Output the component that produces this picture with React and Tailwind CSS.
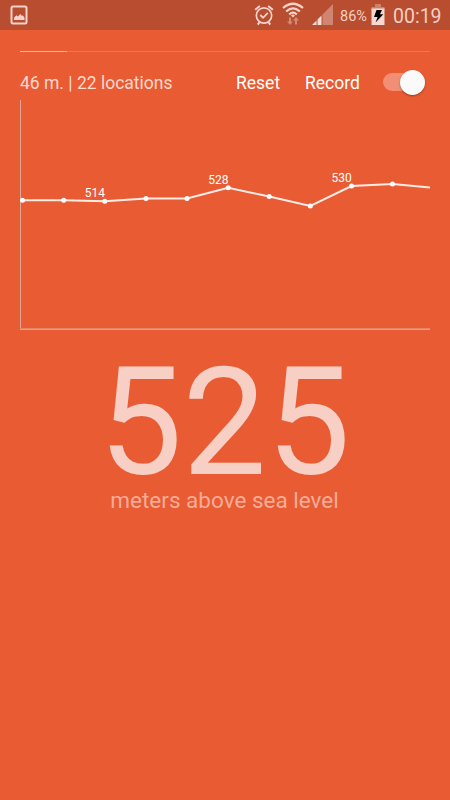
const points = [
  { x: 2.5, y: 100.3 },
  { x: 43.7, y: 100.3 },
  { x: 84.8, y: 101.3, label: '514' },
  { x: 126, y: 98.4 },
  { x: 167, y: 98.4 },
  { x: 208.2, y: 87.8, label: '528' },
  { x: 249.2, y: 96.5 },
  { x: 290.3, y: 106 },
  { x: 331.5, y: 86, label: '530' },
  { x: 372.5, y: 84 },
];

function PictureIcon() {
  return (
    <svg className="h-5 w-[18px]" viewBox="0 0 18 20" fill="none">
      <rect x="1.5" y="1.5" width="15" height="17" rx="1.5" stroke="#f3d3cb" strokeWidth="2" />
      <path d="M4 15v-2.2l2.3-2.5 1.7 1.2 2.2-2.4 1.6 1.6 1.2-.3 1.5 2.4V15z" fill="#f3d3cb" />
    </svg>
  );
}

function AlarmIcon() {
  return (
    <svg className="h-[22px] w-5" viewBox="0 0 20 22" fill="none" stroke="#f3d3cb">
      <circle cx="10" cy="11.500" r="7.700" strokeWidth="1.700" />
      <path d="M1.200 5.800 5.800 2M18.800 5.800 14.200 2M5.500 18.200l-1.700 2.400M14.500 18.200l1.700 2.400" strokeWidth="2" />
      <path d="M6.300 11l2.800 2.800 4.700-4.900" strokeWidth="1.800" />
    </svg>
  );
}

function WifiIcon() {
  return (
    <svg className="h-6 w-[22px]" viewBox="0 0 22 24" fill="none">
      <g stroke="#f3d3cb" strokeWidth="2.200">
        <path d="M1 6Q11-2.500 21 6" />
        <path d="M4.200 9.500Q11 3.200 17.800 9.500" />
        <path d="M7.200 12.500Q11 8.800 14.800 12.500" />
      </g>
      <path d="M9 13.500a3 3 0 0 1 4 0L11 15.500z" fill="#f3d3cb" />
      <path d="M7 15.500h2v4h2L8 23l-3-3.500h2zM13 22.500h2v-4h2L14 15l-3 3.500h2z" fill="#d48a77" />
    </svg>
  );
}

function SignalIcon() {
  return (
    <svg className="h-[21px] w-[21px]" viewBox="0 0 21 21">
      <path d="M10.500 21V10.500L21 0v21z" fill="#d08572" />
      <path d="M0 21l4.500-4.500V21zM5.500 21v-5.500l4-4V21z" fill="#f8ded7" />
    </svg>
  );
}

function BatteryIcon() {
  return (
    <svg className="h-[21px] w-3.5" viewBox="0 0 14 21">
      <path d="M4 0h6v3h3.5v3H.5V3H4z" fill="#cd8270" />
      <path d="M.5 4.5h13V21H.5z" fill="#f8d9d1" />
      <path d="M5.500 6h5.500L9 10.200h3.300L4.600 18.500l2-5.500H3z" fill="#000" />
    </svg>
  );
}

function StatusBar() {
  return (
    <div className="flex h-[30px] items-center bg-[#b84d2f] pl-2.5 pr-[9px] text-[#f3cfc5]">
      <PictureIcon />
      <div className="ml-auto flex items-center">
        <AlarmIcon />
        <div className="ml-2 -mt-0.5"><WifiIcon /></div>
        <div className="ml-2 -mt-px"><SignalIcon /></div>
        <span className="ml-[7px] mt-1 w-[28px] whitespace-nowrap text-[14.5px] leading-5">86%</span>
        <div className="ml-[3px] -mt-0.5"><BatteryIcon /></div>
        <span className="ml-2 mt-[3px] w-[48px] whitespace-nowrap text-[19.5px] leading-6">00:19</span>
      </div>
    </div>
  );
}

function Toggle() {
  return (
    <div className="flex h-[18px] w-[42px] items-center justify-end rounded-full bg-[#f28e73]">
      <div className="h-[25px] w-[25px] shrink-0 rounded-full bg-[#fafafa] shadow-[0_1px_2px_rgba(0,0,0,0.35)]" />
    </div>
  );
}

function Chart() {
  const line = points.map((p) => `${p.x},${p.y}`).join(' ');

  return (
    <svg className="block h-[230px] w-[410px]" viewBox="0 0 410 230">
      <path d="M.5 0v230" stroke="#dfa591" />
      <path d="M0 228.5h410" stroke="#e28565" />
      <path d="M0 229.5h410" stroke="#e0a18c" />
      <polyline points={`${line} 410,87.5`} fill="none" stroke="#fdebe6" strokeWidth="2" />
      {points.map((p) => (
        <g key={p.x}>
          <circle cx={p.x} cy={p.y} r="2.5" fill="#fff" />
          {p.label && (
            <text x={p.x + 0.2} y={p.y - 4.2} textAnchor="end" fontSize="12" fill="#fff">{p.label}</text>
          )}
        </g>
      ))}
    </svg>
  );
}

export default function App() {
  return (
    <div className="h-[800px] w-[450px] overflow-hidden bg-[#e95b33] font-[Roboto,sans-serif]">
      <StatusBar />
      <div className="px-5 pt-5">
        <div className="h-0.5 pt-px">
          <div className="h-px bg-[#ed7554]">
            <div className="h-px w-[47px] bg-[#f8b5a1]" />
          </div>
        </div>
        <div className="flex h-12 items-center pt-[13px] text-[17.5px] leading-6 text-white">
          <span className="w-[216px] whitespace-nowrap text-[#fbd9cf]">46 m. | 22 locations</span>
          <span className="w-[69px]">Reset</span>
          <span className="w-[78px]">Record</span>
          <div className="-mt-px"><Toggle /></div>
        </div>
        <Chart />
      </div>
      <div className="pt-[30px] text-center">
        <div className="pr-px text-[149.5px] leading-[126px] text-[#f8cfc4]">525</div>
        <div className="pr-px text-[22.5px] leading-7 text-[#f5ac97]">meters above sea level</div>
      </div>
    </div>
  );
}
